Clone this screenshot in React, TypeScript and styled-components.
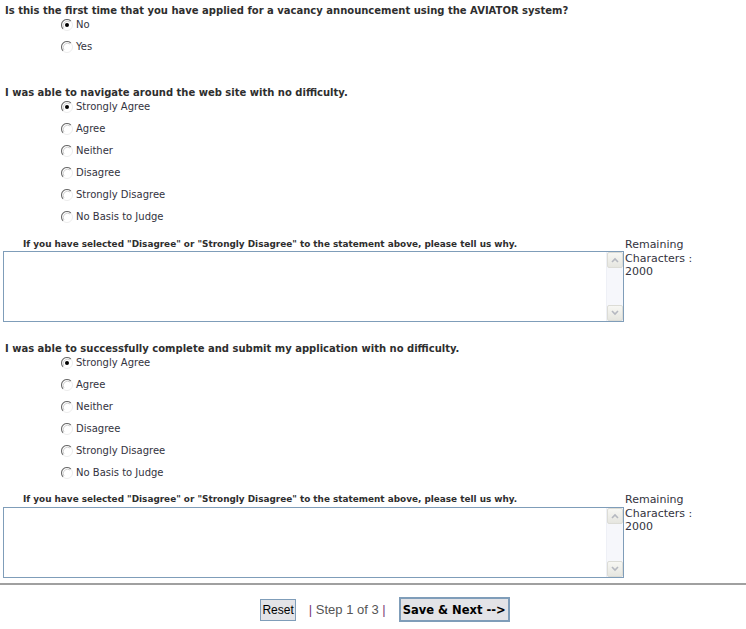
import React from "react";
import styled, { createGlobalStyle } from "styled-components";

const GlobalStyle = createGlobalStyle`
  body {
    margin: 0;
    background: #ffffff;
    font-family: "DejaVu Sans", Verdana, sans-serif;
    color: #333333;
  }
`;

const Page = styled.div`
  width: 746px;
  padding: 4px 0 0;
  box-sizing: border-box;
`;

const Question = styled.div<{ $gap: number }>`
  margin-top: ${(p) => p.$gap}px;
  padding: 0 3px;
`;

const Heading = styled.div`
  padding-left: 2px;
  font-size: 10px;
  font-weight: bold;
  line-height: 13px;
  color: #2e2e2e;
  white-space: nowrap;
`;

const Options = styled.div`
  display: flex;
  flex-direction: column;
  padding-top: 1px;
`;

const OptionRow = styled.label`
  display: flex;
  align-items: center;
  gap: 3px;
  height: 14px;
  margin-bottom: 8px;
  padding-left: 58px;
  font-size: 10px;
  line-height: 14px;
  color: #333340;
`;

const CommentRow = styled.div<{ $top: number }>`
  display: flex;
  align-items: flex-start;
  margin-top: ${(p) => p.$top}px;
`;

const CommentCell = styled.div`
  display: flex;
  flex-direction: column;
  width: 621px;
`;

const CommentLabel = styled.div<{ $gap: number }>`
  padding-left: 20px;
  margin-bottom: ${(p) => p.$gap}px;
  font-size: 8.9px;
  font-weight: bold;
  line-height: 12px;
  color: #2e2e2e;
  white-space: nowrap;
`;

const TextBox = styled.div`
  display: flex;
  height: 71px;
  border: 1px solid #7f9db9;
  box-sizing: border-box;
  background: #ffffff;
`;

const TextInput = styled.textarea`
  flex: 1;
  border: none;
  outline: none;
  resize: none;
  overflow: hidden;
  padding: 2px;
  font-family: "DejaVu Sans", Verdana, sans-serif;
  font-size: 11px;
`;

const ScrollTrack = styled.div`
  display: flex;
  flex-direction: column;
  justify-content: space-between;
  width: 16px;
  background: #f6f7fb;
  border-left: 1px solid #eef0f6;
`;

const ScrollButton = styled.div`
  display: flex;
  align-items: center;
  justify-content: center;
  height: 16px;
  border: 1px solid #dcdcd6;
  border-radius: 2px;
  background: linear-gradient(#f7f7f3, #e6e6e0);
  box-sizing: border-box;
`;

const Remaining = styled.div`
  padding-left: 1px;
  font-size: 11px;
  line-height: 13.5px;
  color: #333340;
`;

const Divider = styled.hr`
  margin: 5px 0 0;
  border: none;
  border-top: 2px solid #a0a0a0;
`;

const Footer = styled.div`
  display: flex;
  align-items: center;
  justify-content: center;
  padding: 12px 0 0 24px;
  gap: 13px;
`;

const Button = styled.button<{ $primary?: boolean }>`
  height: ${(p) => (p.$primary ? 25 : 22)}px;
  padding: 0 ${(p) => (p.$primary ? 2 : 1)}px;
  border: ${(p) => (p.$primary ? 2 : 1)}px solid #7f9db9;
  background: #e3e3e7;
  color: #000000;
  font-family: ${(p) =>
    p.$primary ? '"DejaVu Sans", Verdana, sans-serif' : '"Liberation Sans", Arial, sans-serif'};
  font-size: ${(p) => (p.$primary ? 11.5 : 12)}px;
  font-weight: ${(p) => (p.$primary ? "bold" : "normal")};
`;

const Step = styled.span`
  font-family: "Liberation Sans", Arial, sans-serif;
  font-size: 13px;
  color: #555555;
`;

const Pipe = styled.span`
  color: #7a3a7a;
`;

const Radio = ({ checked }: { checked?: boolean }) => (
  <svg width="12" height="12" viewBox="0 0 12 12">
    <circle cx="6" cy="6" r="5.5" fill="#ffffff" />
    <path d="M2.1 9.9 A5.5 5.5 0 0 1 9.9 2.1" fill="none" stroke="#6e6e6e" strokeWidth="1.1" />
    <path d="M9.9 2.1 A5.5 5.5 0 0 1 2.1 9.9" fill="none" stroke="#ececec" strokeWidth="1" />
    <path d="M3 9 A4.3 4.3 0 0 1 9 3" fill="none" stroke="#c4c4c4" strokeWidth="0.8" />
    {checked && <circle cx="6" cy="6" r="2" fill="#000000" />}
  </svg>
);

const Arrow = ({ up }: { up?: boolean }) => (
  <svg width="8" height="6" viewBox="0 0 8 6">
    <path
      d={up ? "M1 5 L4 2 L7 5" : "M1 1 L4 4 L7 1"}
      fill="none"
      stroke="#b5b8c0"
      strokeWidth="1.6"
    />
  </svg>
);

const agreeScale = [
  "Strongly Agree",
  "Agree",
  "Neither",
  "Disagree",
  "Strongly Disagree",
  "No Basis to Judge",
];

type QuestionProps = {
  text: string;
  options: string[];
  gap: number;
};

const QuestionBlock = ({ text, options, gap }: QuestionProps) => (
  <Question $gap={gap}>
    <Heading>{text}</Heading>
    <Options>
      {options.map((opt, i) => (
        <OptionRow key={opt}>
          <Radio checked={i === 0} />
          {opt}
        </OptionRow>
      ))}
    </Options>
  </Question>
);

const Comment = ({ top, labelGap }: { top: number; labelGap: number }) => (
  <CommentRow $top={top}>
    <CommentCell>
      <CommentLabel $gap={labelGap}>
        If you have selected "Disagree" or "Strongly Disagree" to the statement above, please tell
        us why.
      </CommentLabel>
      <TextBox>
        <TextInput />
        <ScrollTrack>
          <ScrollButton>
            <Arrow up />
          </ScrollButton>
          <ScrollButton>
            <Arrow />
          </ScrollButton>
        </ScrollTrack>
      </TextBox>
    </CommentCell>
    <Remaining>
      Remaining
      <br />
      Characters :
      <br />
      2000
    </Remaining>
  </CommentRow>
);

const App = () => (
  <Page>
    <GlobalStyle />
    <QuestionBlock
      gap={0}
      text="Is this the first time that you have applied for a vacancy announcement using the AVIATOR system?"
      options={["No", "Yes"]}
    />
    <QuestionBlock
      gap={24}
      text="I was able to navigate around the web site with no difficulty."
      options={agreeScale}
    />
    <Question $gap={0}>
      <Comment top={6} labelGap={1} />
    </Question>
    <QuestionBlock
      gap={20}
      text="I was able to successfully complete and submit my application with no difficulty."
      options={agreeScale}
    />
    <Question $gap={0}>
      <Comment top={5} labelGap={2} />
    </Question>
    <Divider />
    <Footer>
      <Button>Reset</Button>
      <Step>
        <Pipe>|</Pipe> Step 1 of 3 <Pipe>|</Pipe>
      </Step>
      <Button $primary>Save &amp; Next --&gt;</Button>
    </Footer>
  </Page>
);

export default App;
